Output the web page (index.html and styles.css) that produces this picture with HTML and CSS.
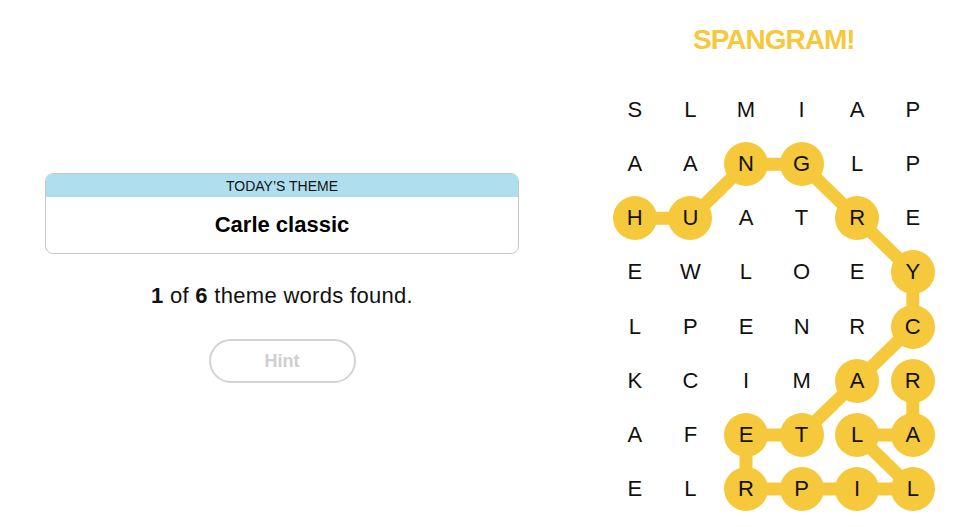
FILE: index.html
```html
<!DOCTYPE html>
<html lang="en">
<head>
  <meta charset="UTF-8">
  <meta name="viewport" content="width=device-width, initial-scale=1.0">
  <title>Strands</title>
  <link rel="stylesheet" href="styles.css">
</head>
<body>
  <div class="game">
    <div class="info">
      <div class="theme-card">
        <div class="theme-label">TODAY’S THEME</div>
        <div class="theme-name">Carle classic</div>
      </div>
      <p class="progress"><b>1</b> of <b>6</b> theme words found.</p>
      <button class="hint-btn" disabled>Hint</button>
    </div>

    <div class="board">
      <h2 class="board-status">SPANGRAM!</h2>
      <div class="grid-wrap">
        <svg class="path-lines" viewBox="0 0 333.6 433.1" width="333.6" height="433.1">
          <polyline points="27.8,135.35 83.4,135.35 139,81.2 194.6,81.2 250.2,135.35 305.8,189.5 305.8,243.6 250.2,297.8 194.6,351.9 139,351.9 139,406.1 194.6,406.1 250.2,406.1 305.8,406.1 250.2,351.9 305.8,351.9 305.8,297.8" />
        </svg>
        <div class="grid">
          <div class="cell"><span>S</span></div>
          <div class="cell"><span>L</span></div>
          <div class="cell"><span>M</span></div>
          <div class="cell"><span>I</span></div>
          <div class="cell"><span>A</span></div>
          <div class="cell"><span>P</span></div>

          <div class="cell"><span>A</span></div>
          <div class="cell"><span>A</span></div>
          <div class="cell found"><span>N</span></div>
          <div class="cell found"><span>G</span></div>
          <div class="cell"><span>L</span></div>
          <div class="cell"><span>P</span></div>

          <div class="cell found"><span>H</span></div>
          <div class="cell found"><span>U</span></div>
          <div class="cell"><span>A</span></div>
          <div class="cell"><span>T</span></div>
          <div class="cell found"><span>R</span></div>
          <div class="cell"><span>E</span></div>

          <div class="cell"><span>E</span></div>
          <div class="cell"><span>W</span></div>
          <div class="cell"><span>L</span></div>
          <div class="cell"><span>O</span></div>
          <div class="cell"><span>E</span></div>
          <div class="cell found"><span>Y</span></div>

          <div class="cell"><span>L</span></div>
          <div class="cell"><span>P</span></div>
          <div class="cell"><span>E</span></div>
          <div class="cell"><span>N</span></div>
          <div class="cell"><span>R</span></div>
          <div class="cell found"><span>C</span></div>

          <div class="cell"><span>K</span></div>
          <div class="cell"><span>C</span></div>
          <div class="cell"><span>I</span></div>
          <div class="cell"><span>M</span></div>
          <div class="cell found"><span>A</span></div>
          <div class="cell found"><span>R</span></div>

          <div class="cell"><span>A</span></div>
          <div class="cell"><span>F</span></div>
          <div class="cell found"><span>E</span></div>
          <div class="cell found"><span>T</span></div>
          <div class="cell found"><span>L</span></div>
          <div class="cell found"><span>A</span></div>

          <div class="cell"><span>E</span></div>
          <div class="cell"><span>L</span></div>
          <div class="cell found"><span>R</span></div>
          <div class="cell found"><span>P</span></div>
          <div class="cell found"><span>I</span></div>
          <div class="cell found"><span>L</span></div>
        </div>
      </div>
    </div>
  </div>
</body>
</html>
```

FILE: styles.css
```css
body {
  margin: 0;
  padding: 0;
  background-color: #fff;
  font-family: "Liberation Sans", Arial, sans-serif;
  color: #000;
}

.game {
  display: flex;
  width: 955px;
  height: 527px;
  overflow: hidden;
}

.info {
  width: 474px;
  padding: 173px 45px 0;
  display: flex;
  flex-direction: column;
  align-items: center;
}

.theme-card {
  width: 100%;
  box-sizing: border-box;
  border: 1px solid #c6c6c6;
  border-radius: 8px;
  overflow: hidden;
  text-align: center;
}

.theme-label {
  background-color: #afdfee;
  height: 23px;
  line-height: 24px;
  font-size: 14px;
  color: #111;
}

.theme-name {
  height: 56px;
  line-height: 56px;
  font-size: 22px;
  font-weight: bold;
}

.progress {
  margin: 29px 0 0;
  font-size: 22px;
  line-height: 26px;
  letter-spacing: 0.3px;
  color: #111;
}

.hint-btn {
  margin-top: 30px;
  width: 147px;
  height: 44px;
  border: 2px solid #d3d3d3;
  border-radius: 22px;
  background-color: #fff;
  font-family: inherit;
  font-size: 18px;
  font-weight: bold;
  color: #cfcfcf;
}

.board {
  margin-left: 43px;
  width: 333.6px;
}

.board-status {
  margin: 24px 0 0;
  height: 32px;
  line-height: 32px;
  text-align: center;
  font-size: 28px;
  font-weight: bold;
  letter-spacing: -1px;
  color: #f6c83c;
}

.grid-wrap {
  position: relative;
  margin-top: 27px;
  width: 333.6px;
  height: 433.1px;
}

.path-lines {
  position: absolute;
  top: 0;
  left: 0;
}

.path-lines polyline {
  fill: none;
  stroke: #f6c83c;
  stroke-width: 13;
  stroke-linejoin: round;
}

.grid {
  position: relative;
  display: grid;
  grid-template-columns: repeat(6, 55.6px);
  grid-template-rows: repeat(8, 54.14px);
}

.cell {
  display: flex;
  align-items: center;
  justify-content: center;
}

.cell span {
  width: 44px;
  height: 44px;
  border-radius: 50%;
  display: flex;
  align-items: center;
  justify-content: center;
  font-size: 22px;
  color: #111;
}

.cell.found span {
  background-color: #f6c83c;
}
```
